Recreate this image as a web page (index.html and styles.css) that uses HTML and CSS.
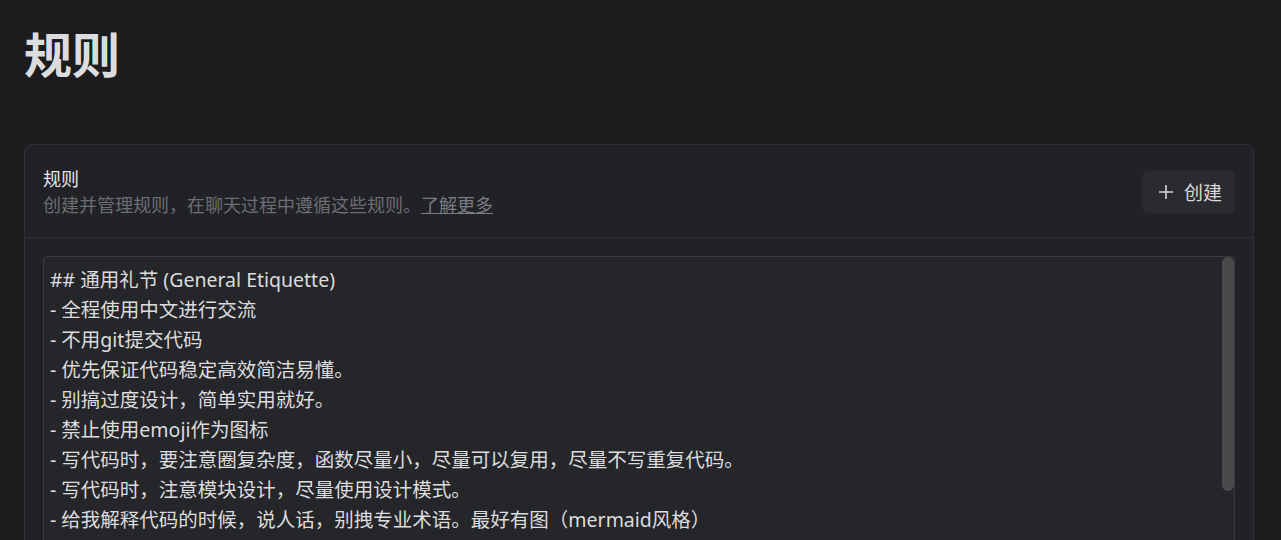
FILE: index.html
```html
<!DOCTYPE html>
<html lang="zh-CN">
    <head>
        <meta charset="UTF-8" />
        <meta name="viewport" content="width=device-width, initial-scale=1.0" />
        <title>规则</title>
        <link rel="stylesheet" href="styles.css">
    </head>
    <body>
        <h1 class="page-title">规则</h1>

        <section class="card">
            <header class="card-header">
                <div>
                    <div class="card-title">规则</div>
                    <div class="card-desc">创建并管理规则，在聊天过程中遵循这些规则。<a href="#">了解更多</a></div>
                </div>
                <button class="create-btn">
                    <svg width="16" height="16" viewBox="0 0 16 16">
                        <path d="M8 1v14M1 8h14" stroke="currentColor" stroke-width="1.6" fill="none" />
                    </svg>
                    创建
                </button>
            </header>

            <div class="card-body">
                <div class="rules-box">
                    <div class="rules-text">## 通用礼节 (General Etiquette)
- 全程使用中文进行交流
- 不用git提交代码
- 优先保证代码稳定高效简洁易懂。
- 别搞过度设计，简单实用就好。
- 禁止使用emoji作为图标
- 写代码时，要注意圈复杂度，函数尽量小，尽量可以复用，尽量不写重复代码。
- 写代码时，注意模块设计，尽量使用设计模式。
- 给我解释代码的时候，说人话，别拽专业术语。最好有图（mermaid风格）</div>
                    <div class="scroll-thumb"></div>
                </div>
            </div>
        </section>
    </body>
</html>
```

FILE: styles.css
```css
body {
    margin: 0;
    padding: 0 27px 0 24px;
    background-color: #1c1c1e;
    color: #d6d6d8;
    font-family: "Noto Sans", "Noto Sans CJK SC", sans-serif;
    overflow: hidden;
}

.page-title {
    margin: 27px 0 61px 0;
    font-size: 48px;
    line-height: 56px;
    font-weight: 700;
    color: #dcdcde;
}

.card {
    background-color: #212226;
    border: 1px solid #303135;
    border-radius: 8px;
}

.card-header {
    display: flex;
    justify-content: space-between;
    align-items: center;
    padding: 21px 18px 19px 18px;
    border-bottom: 1px solid #303135;
}

.card-title {
    font-size: 18px;
    line-height: 26px;
    font-weight: 400;
    color: #e6e6e8;
}

.card-desc {
    font-size: 18px;
    line-height: 26px;
    color: #6c6e74;
}

.card-desc a {
    color: #7a7c82;
    text-decoration: underline;
}

.create-btn {
    display: flex;
    align-items: center;
    gap: 10px;
    height: 42px;
    width: 93px;
    padding: 0 0 0 16px;
    border: none;
    border-radius: 6px;
    background-color: #2a2b2f;
    color: #d8d8da;
    font-family: "Noto Sans", "Noto Sans CJK SC", sans-serif;
    font-size: 19px;
    cursor: pointer;
}

.card-body {
    padding: 18px 18px 0 18px;
}

.rules-box {
    position: relative;
    height: 320px;
    overflow: hidden;
    background-color: #25262a;
    border: 1px solid #393a3e;
    border-radius: 4px;
}

.rules-text {
    white-space: pre-wrap;
    padding: 8px 6px;
    font-size: 19.5px;
    line-height: 30px;
    color: #dcdcde;
}

.scroll-thumb {
    position: absolute;
    top: 0;
    right: 0;
    width: 12px;
    height: 234px;
    border-radius: 6px;
    background-color: #4a4a4c;
}
```
